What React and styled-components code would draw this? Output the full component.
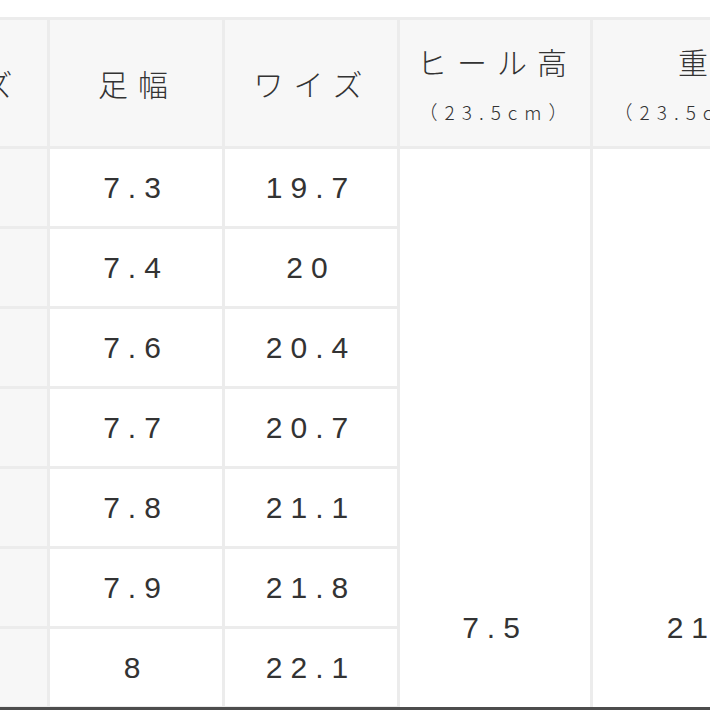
import React from "react";
import styled, { createGlobalStyle } from "styled-components";

const Global = createGlobalStyle`
  html, body { margin: 0; padding: 0; background: #fff; }
  body { font-family: "Liberation Sans", "Noto Sans CJK JP", sans-serif; color: #333; }
`;

const Viewport = styled.div`
  width: 710px;
  height: 707px;
  overflow: hidden;
  padding-top: 17px;
  box-sizing: border-box;
`;

const BottomEdge = styled.div`
  width: 710px;
  height: 3px;
  background: #4d4d4d;
`;

const Table = styled.table`
  margin-left: -128px;
  border-collapse: separate;
  border-spacing: 3px;
  background: #ececec;
  table-layout: fixed;
  width: ${(p) => p.$w}px;
`;

const HeadCell = styled.th`
  height: 126px;
  padding: 0;
  background: #f7f7f7;
  font-weight: 300;
  font-family: "Noto Sans CJK JP", sans-serif;
  font-size: 30px;
  letter-spacing: 10px;
  color: #333;
  text-align: center;
  vertical-align: middle;
  white-space: nowrap;
  overflow: hidden;
`;

const HeadMain = styled.div`
  line-height: 1;
  padding-left: 4px;
`;

const HeadSub = styled.div`
  margin-top: 26px;
  font-size: 19px;
  letter-spacing: 7px;
  line-height: 1;
  padding-left: 3px;
`;

const Cell = styled.td`
  height: 77px;
  padding: 0;
  background: ${(p) => (p.$side ? "#f7f7f7" : "#fff")};
  font-size: 30px;
  letter-spacing: 8px;
  text-align: center;
  vertical-align: middle;
  white-space: nowrap;
  overflow: hidden;
`;

const widths = [172, 172, 172, 190, 246];

const rows = [
  ["22", "7.3", "19.7"],
  ["22.5", "7.4", "20"],
  ["23", "7.6", "20.4"],
  ["23.5", "7.7", "20.7"],
  ["24", "7.8", "21.1"],
  ["24.5", "7.9", "21.8"],
  ["25", "8", "22.1"],
  ["25.5", "8.1", "22.5"],
  ["26", "8.3", "22.9"],
  ["26.5", "8.4", "23.2"],
  ["27", "8.5", "23.6"],
  ["27.5", "8.6", "24"],
];

export default function App() {
  const total = widths.reduce((a, b) => a + b, 0) + 3 * (widths.length + 1);
  return (
    <>
      <Global />
      <Viewport>
        <Table $w={total}>
          <colgroup>
            {widths.map((w, i) => (
              <col key={i} style={{ width: w }} />
            ))}
          </colgroup>
          <thead>
            <tr>
              <HeadCell><HeadMain>サイズ</HeadMain></HeadCell>
              <HeadCell><HeadMain>足幅</HeadMain></HeadCell>
              <HeadCell><HeadMain>ワイズ</HeadMain></HeadCell>
              <HeadCell>
                <HeadMain>ヒール高</HeadMain>
                <HeadSub>（23.5cm）</HeadSub>
              </HeadCell>
              <HeadCell>
                <HeadMain>重量</HeadMain>
                <HeadSub>（23.5cm片足）</HeadSub>
              </HeadCell>
            </tr>
          </thead>
          <tbody>
            {rows.map((r, i) => (
              <tr key={i}>
                <Cell $side>{r[0]}</Cell>
                <Cell>{r[1]}</Cell>
                <Cell>{r[2]}</Cell>
                {i === 0 && (
                  <>
                    <Cell rowSpan={rows.length}>7.5</Cell>
                    <Cell rowSpan={rows.length}>210g</Cell>
                  </>
                )}
              </tr>
            ))}
          </tbody>
        </Table>
      </Viewport>
      <BottomEdge />
    </>
  );
}
